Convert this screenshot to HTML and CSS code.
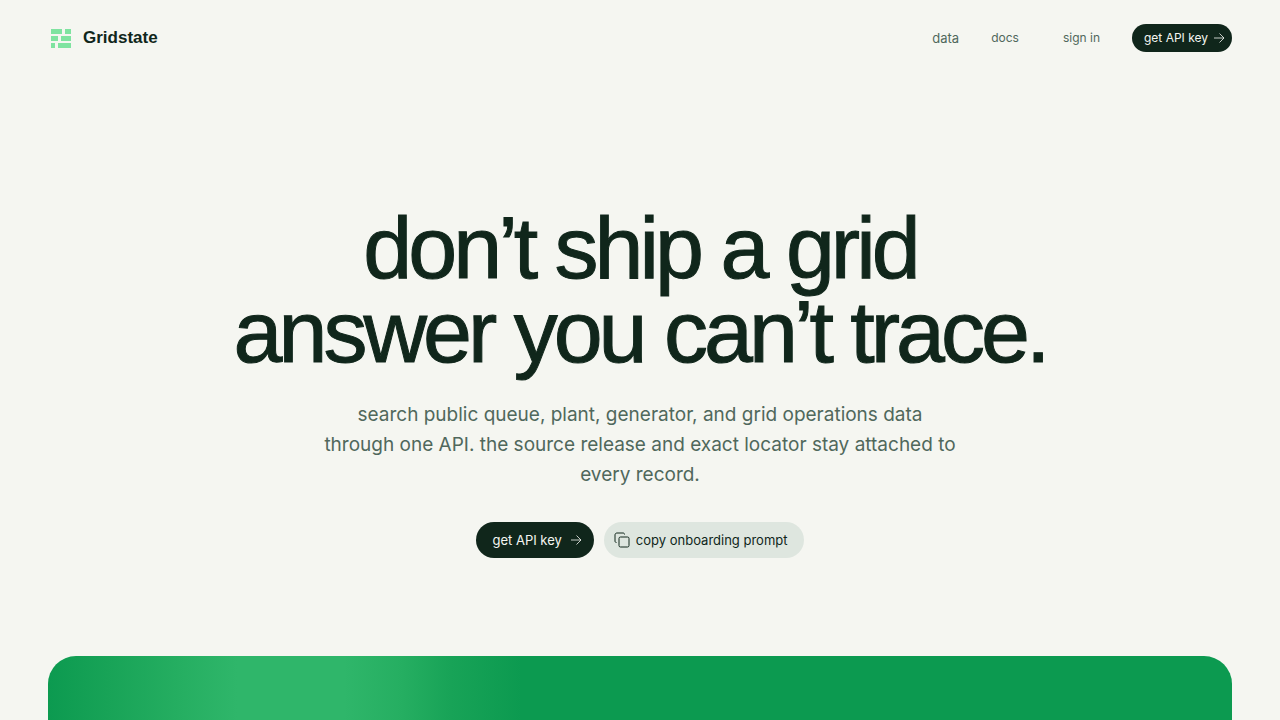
FILE: index.html
```html
<!DOCTYPE html>
<html lang="en">
<head>
<meta charset="utf-8">
<meta name="viewport" content="width=device-width, initial-scale=1">
<title>Gridstate</title>
<link rel="stylesheet" href="styles.css">
</head>
<body>
<header class="header">
  <a class="brand" href="#">
    <svg class="brand-mark" viewBox="0 0 25 25" aria-hidden="true"><path d="M3 3h11v5H3zM17 3h6v5h-6zM3 10h7v5H3zM13 10h10v5H13zM3 17h4v5H3zM10 17h13v5H10z"/></svg>
    <span>Gridstate</span>
  </a>
  <nav class="nav">
    <a class="nav-link nav-link-active" href="#">data</a>
    <a class="nav-link" href="#">docs</a>
    <a class="nav-link nav-signin" href="#">sign in</a>
    <button class="button button-small" type="button">get API key
      <svg class="arrow" viewBox="0 0 12 12" aria-hidden="true"><path d="M1 6h10M6.500 1.500l4.500 4.500-4.500 4.500"/></svg>
    </button>
  </nav>
</header>
<main class="main">
  <section class="hero">
    <h1 class="title">don’t ship a grid<br>answer you can’t trace.</h1>
    <p class="lead">search public queue, plant, generator, and grid operations data through one API. the source release and exact locator stay attached to every record.</p>
    <div class="actions">
      <button class="button button-primary" type="button">get API key
        <svg class="arrow" viewBox="0 0 12 12" aria-hidden="true"><path d="M1 6h10M6.500 1.500l4.500 4.500-4.500 4.500"/></svg>
      </button>
      <button class="button button-soft" type="button">
        <svg class="copy" viewBox="0 0 16 16" aria-hidden="true"><rect x="5" y="5" width="10" height="10" rx="1.500"/><path d="M2.500 10.500C1.500 10.500 1 10 1 9V3c0-1.200.8-2 2-2h6c1 0 1.500.5 1.500 1.500"/></svg>
        copy onboarding prompt
      </button>
    </div>
  </section>
  <section class="panel"></section>
</main>
</body>
</html>
```
FILE: styles.css
```css
* { box-sizing: border-box; }
body { display: flex; flex-direction: column; min-height: 100vh; margin: 0; background: #f5f6f1; color: #10261b; font-family: Inter, sans-serif; }
.header { display: flex; align-items: center; justify-content: space-between; padding: 24px 48px; }
.brand { display: flex; align-items: center; gap: 10px; color: inherit; text-decoration: none; font-family: "Liberation Sans", sans-serif; font-size: 17px; line-height: 26px; font-weight: 700; }
.brand-mark { width: 25px; height: 25px; fill: #7fe3a0; }
.nav { display: flex; align-items: center; gap: 32px; }
.nav-link { color: #50685c; font-size: 12px; line-height: 16px; text-decoration: none; }
.nav-link-active { font-size: 13px; }
.nav-signin { margin-left: 12px; }
.button { display: flex; align-items: center; border: 0; border-radius: 18px; font-family: inherit; font-size: 13px; line-height: 16px; color: #f5f6f1; background: #10261b; white-space: nowrap; cursor: pointer; }
.button-small { padding: 6px 7px 6px 12px; gap: 5px; font-size: 12px; }
.button-primary { padding: 10px 12px 10px 16px; gap: 8px; }
.button-soft { padding: 10px 16px 10px 10px; gap: 6px; color: #10261b; background: #dee6df; }
.arrow { width: 12px; height: 12px; fill: none; stroke: currentColor; stroke-width: 0.8; }
.copy { width: 16px; height: 16px; fill: none; stroke: currentColor; }
.main { display: flex; flex: 1; flex-direction: column; }
.hero { display: flex; flex-direction: column; align-items: center; padding: 130px 48px 98px; text-align: center; }
.title { margin: 0; font-family: "Liberation Sans", Arial, sans-serif; font-size: 88px; line-height: 84px; font-weight: 400; letter-spacing: -4px; -webkit-text-stroke: 1px currentColor; }
.lead { max-width: 640px; margin: 26px 0 32px; color: #50685c; font-size: 19px; line-height: 30px; }
.actions { display: flex; gap: 10px; }
.panel { flex: 1; min-height: 64px; margin: 0 48px; border-radius: 28px 28px 0 0; background: linear-gradient(90deg, #0c9a50 0%, #18a357 5%, #25ae61 11%, #2fb66a 16%, #2fb66a 25%, #25ae61 30%, #18a357 34%, #0c9a50 40%); }
```
